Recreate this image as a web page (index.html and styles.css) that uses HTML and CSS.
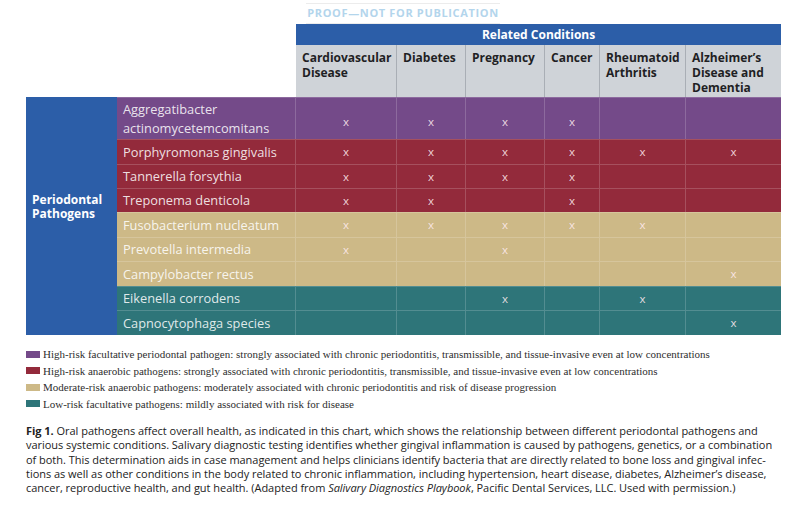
FILE: index.html
```html
<!DOCTYPE html>
<html>
<head>
<meta charset="utf-8">
<link rel="stylesheet" href="styles.css">
</head>
<body>
<div class="page">
  <div class="proof"><span>PROOF—NOT FOR PUBLICATION</span></div>
  <table class="chart">
    <colgroup>
      <col class="c-group"><col class="c-name"><col class="c-cvd"><col class="c-dia"><col class="c-preg"><col class="c-can"><col class="c-ra"><col class="c-alz">
    </colgroup>
    <thead>
      <tr class="top">
        <th colspan="2" class="blank"></th>
        <th colspan="6" class="rc">Related Conditions</th>
      </tr>
      <tr class="conds">
        <th colspan="2" class="blank"></th>
        <th>Cardiovascular Disease</th>
        <th>Diabetes</th>
        <th>Pregnancy</th>
        <th>Cancer</th>
        <th>Rheumatoid Arthritis</th>
        <th>Alzheimer’s Disease and Dementia</th>
      </tr>
    </thead>
    <tbody>
      <tr class="purple tall">
        <th rowspan="9" class="group">Periodontal Pathogens</th>
        <td class="name">Aggregatibacter actinomycetemcomitans</td>
        <td>x</td><td>x</td><td>x</td><td>x</td><td></td><td></td>
      </tr>
      <tr class="red r25">
        <td class="name">Porphyromonas gingivalis</td>
        <td>x</td><td>x</td><td>x</td><td>x</td><td>x</td><td>x</td>
      </tr>
      <tr class="red r24">
        <td class="name">Tannerella forsythia</td>
        <td>x</td><td>x</td><td>x</td><td>x</td><td></td><td></td>
      </tr>
      <tr class="red r24 last">
        <td class="name">Treponema denticola</td>
        <td>x</td><td>x</td><td></td><td>x</td><td></td><td></td>
      </tr>
      <tr class="tan r25">
        <td class="name">Fusobacterium nucleatum</td>
        <td>x</td><td>x</td><td>x</td><td>x</td><td>x</td><td></td>
      </tr>
      <tr class="tan r24">
        <td class="name">Prevotella intermedia</td>
        <td>x</td><td></td><td>x</td><td></td><td></td><td></td>
      </tr>
      <tr class="tan r25 last">
        <td class="name">Campylobacter rectus</td>
        <td></td><td></td><td></td><td></td><td></td><td>x</td>
      </tr>
      <tr class="teal r24">
        <td class="name">Eikenella corrodens</td>
        <td></td><td></td><td>x</td><td></td><td>x</td><td></td>
      </tr>
      <tr class="teal r25 last">
        <td class="name">Capnocytophaga species</td>
        <td></td><td></td><td></td><td></td><td></td><td>x</td>
      </tr>
    </tbody>
  </table>

  <ul class="legend">
    <li><span class="sw sw-purple"></span>High-risk facultative periodontal pathogen: strongly associated with chronic periodontitis, transmissible, and tissue-invasive even at low concentrations</li>
    <li><span class="sw sw-red"></span>High-risk anaerobic pathogens: strongly associated with chronic periodontitis, transmissible, and tissue-invasive even at low concentrations</li>
    <li><span class="sw sw-tan"></span>Moderate-risk anaerobic pathogens: moderately associated with chronic periodontitis and risk of disease progression</li>
    <li><span class="sw sw-teal"></span>Low-risk facultative pathogens: mildly associated with risk for disease</li>
  </ul>

  <p class="caption"><b>Fig 1.</b> Oral pathogens affect overall health, as indicated in this chart, which shows the relationship between different periodontal pathogens and<br>various systemic conditions. Salivary diagnostic testing identifies whether gingival inflammation is caused by pathogens, genetics, or a combination<br>of both. This determination aids in case management and helps clinicians identify bacteria that are directly related to bone loss and gingival infec-<br>tions as well as other conditions in the body related to chronic inflammation, including hypertension, heart disease, diabetes, Alzheimer’s disease,<br>cancer, reproductive health, and gut health. (Adapted from <i>Salivary Diagnostics Playbook</i>, Pacific Dental Services, LLC. Used with permission.)</p>
</div>
</body>
</html>
```

FILE: styles.css
```css
html, body {
  margin: 0;
  padding: 0;
  background: #ffffff;
}

.page {
  width: 792px;
  height: 506px;
  padding-left: 26px;
  box-sizing: border-box;
  font-family: "Open Sans", "Liberation Sans", sans-serif;
  overflow: hidden;
}

/* proof label */
.proof {
  padding-left: 280px;
  height: 24px;
}
.proof span {
  display: inline-block;
  border-top: 1px solid #ececec;
  border-bottom: 1px solid #ececec;
  height: 21px;
  line-height: 18px;
  width: 194px;
  text-align: center;
  font-size: 11px;
  font-weight: 700;
  letter-spacing: 0.65px;
  color: #b3d5ec;
  box-sizing: border-box;
}

/* table */
.chart {
  border-collapse: separate;
  border-spacing: 0;
  table-layout: fixed;
  width: 755px;
}
.c-group { width: 91px; }
.c-name { width: 179px; }
.c-cvd { width: 101px; }
.c-dia { width: 69px; }
.c-preg { width: 79px; }
.c-can { width: 55px; }
.c-ra { width: 86px; }
.c-alz { width: 95px; }

.chart th, .chart td {
  padding: 0;
  box-sizing: border-box;
}

.top { height: 21px; }
.top .blank { background: #ffffff; }
.top .rc {
  background: #2c5ea8;
  color: #ffffff;
  font-size: 12px;
  font-weight: 700;
  text-align: center;
  vertical-align: middle;
  line-height: 21px;
}

.conds { height: 52px; }
.conds .blank { background: #ffffff; }
.conds th {
  background: #cfd3d8;
  color: #1f1f24;
  font-size: 12px;
  font-weight: 700;
  text-align: left;
  vertical-align: top;
  line-height: 15px;
  padding: 5px 3px 0 6px;
  border-right: 1px solid #a9aeb5;
}
.conds th:last-child { border-right: none; }
.conds th.blank { border-right: none; }

.group {
  background: #2c5ea8;
  color: #ffffff;
  font-size: 12px;
  font-weight: 700;
  text-align: left;
  vertical-align: middle;
  line-height: 14px;
  padding: 0 4px 18px 6px !important;
}

.chart tbody td {
  text-align: center;
  vertical-align: middle;
  font-size: 11.5px;
  line-height: 14px;
  color: rgba(255, 235, 240, 0.88);
  border-right: 1px solid rgba(255, 255, 255, 0.18);
  border-top: 1px solid rgba(255, 255, 255, 0.18);
}
.chart tbody td:last-child { border-right: none; }

.chart tbody td.name {
  text-align: left;
  font-size: 12.8px;
  line-height: 19px;
  padding-left: 6px;
  color: rgba(255, 255, 255, 0.86);
}

.tall { height: 42px; }
.tall td { vertical-align: top; padding-top: 6px; }
.tall td.name { vertical-align: middle; padding-top: 0; }
.r24 { height: 24px; }
.r25 { height: 25px; }

.purple td { background: #744a89; }
.red td { background: #932a3b; }
.tan td { background: #cdb987; color: rgba(255, 255, 255, 0.92); }
.tan td.name { color: rgba(255, 255, 255, 0.92); }
.teal td { background: #2e7579; }

/* legend */
.legend {
  list-style: none;
  margin: 11px 0 0 0;
  padding: 0;
  font-family: "Liberation Serif", "DejaVu Serif", serif;
  font-size: 11px;
  line-height: 16.5px;
  color: #2e2e2e;
}
.legend li {
  display: flex;
  align-items: center;
  white-space: nowrap;
}
.sw {
  display: inline-block;
  width: 14px;
  height: 7px;
  margin-right: 3px;
  flex: none;
}
.sw-purple { background: #744a89; }
.sw-red { background: #932a3b; }
.sw-tan { background: #cdb987; }
.sw-teal { background: #2e7579; }

/* caption */
.caption {
  margin: 12px 0 0 0;
  font-size: 11px;
  letter-spacing: -0.03px;
  line-height: 14.3px;
  color: #222222;
  white-space: nowrap;
}
.caption b { font-weight: 700; }
```
